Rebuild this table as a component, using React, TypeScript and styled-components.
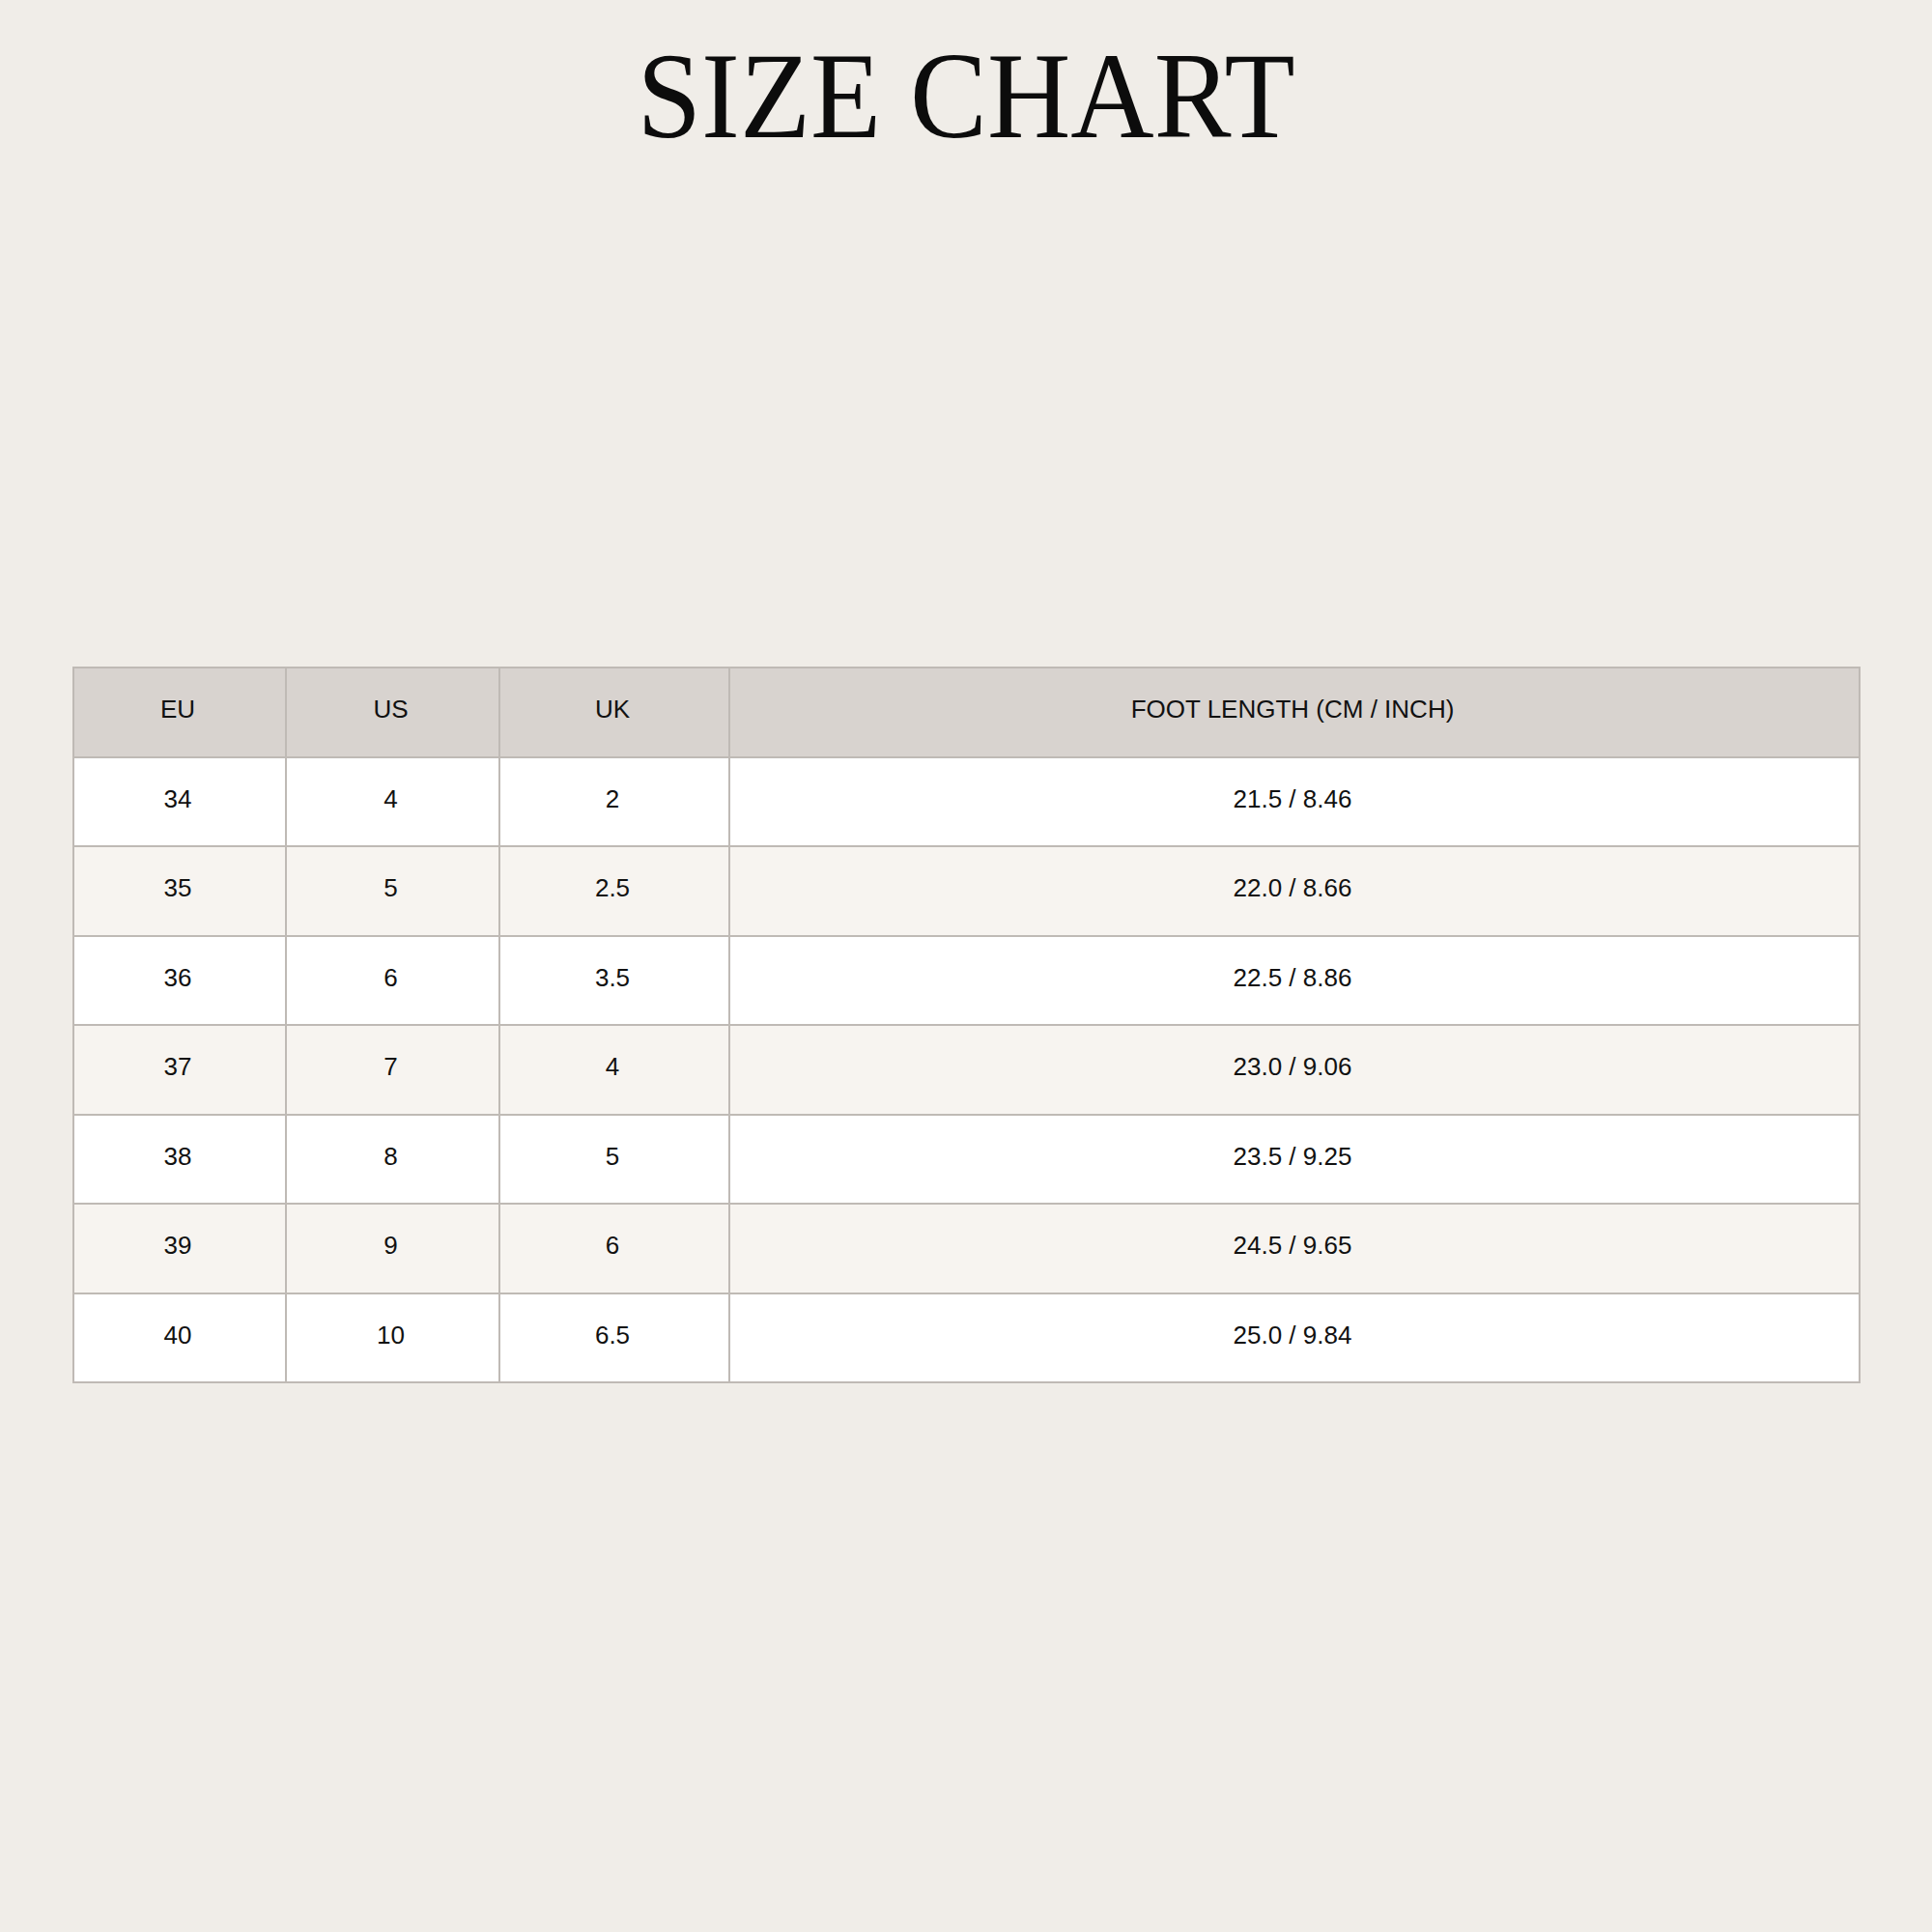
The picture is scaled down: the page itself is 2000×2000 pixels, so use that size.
import React from "react";
import styled, { createGlobalStyle } from "styled-components";

const GlobalStyle = createGlobalStyle`
  html, body {
    margin: 0;
    padding: 0;
    background: #f0ede8;
  }
`;

const sizes = [
  { eu: "34", us: "4", uk: "2", foot: "21.5 / 8.46" },
  { eu: "35", us: "5", uk: "2.5", foot: "22.0 / 8.66" },
  { eu: "36", us: "6", uk: "3.5", foot: "22.5 / 8.86" },
  { eu: "37", us: "7", uk: "4", foot: "23.0 / 9.06" },
  { eu: "38", us: "8", uk: "5", foot: "23.5 / 9.25" },
  { eu: "39", us: "9", uk: "6", foot: "24.5 / 9.65" },
  { eu: "40", us: "10", uk: "6.5", foot: "25.0 / 9.84" },
];

const Page = styled.div`
  width: 2000px;
  height: 2000px;
  background: #f0ede8;
  padding-top: 35px;
  box-sizing: border-box;
`;

const Title = styled.h1`
  margin: 0;
  font-family: "Liberation Serif", "Times New Roman", serif;
  font-weight: 400;
  font-size: 128px;
  line-height: 1;
  color: #0c0c0c;
  text-align: center;
  transform: scaleX(0.935);
`;

const TableWrap = styled.div`
  margin-top: 527px;
  padding: 0 74px 0 75px;
`;

const Table = styled.table`
  width: 100%;
  border-collapse: collapse;
  table-layout: fixed;
  font-family: "Liberation Sans", Arial, sans-serif;
  font-size: 26px;
  color: #111;
  border: 2px solid #bfbab5;
`;

const HeadCell = styled.th`
  height: 85.5px;
  padding: 0 4px 5px 0;
  background: #d8d3cf;
  font-weight: 400;
  text-align: center;
  vertical-align: middle;
  border: 2px solid #bfbab5;
`;

const Row = styled.tr<{ $striped: boolean }>`
  background: ${(p) => (p.$striped ? "#f7f4f0" : "#ffffff")};
`;

const Cell = styled.td`
  height: 85.5px;
  padding: 0 4px 5px 0;
  text-align: center;
  vertical-align: middle;
  border: 2px solid #bfbab5;
`;

const App = () => (
  <>
    <GlobalStyle />
    <Page>
      <Title>SIZE CHART</Title>
      <TableWrap>
        <Table>
          <colgroup>
            <col style={{ width: 220 }} />
            <col style={{ width: 221 }} />
            <col style={{ width: 238 }} />
            <col />
          </colgroup>
          <thead>
            <tr>
              <HeadCell>EU</HeadCell>
              <HeadCell>US</HeadCell>
              <HeadCell>UK</HeadCell>
              <HeadCell>FOOT LENGTH (CM / INCH)</HeadCell>
            </tr>
          </thead>
          <tbody>
            {sizes.map((s, i) => (
              <Row key={s.eu} $striped={i % 2 === 1}>
                <Cell>{s.eu}</Cell>
                <Cell>{s.us}</Cell>
                <Cell>{s.uk}</Cell>
                <Cell>{s.foot}</Cell>
              </Row>
            ))}
          </tbody>
        </Table>
      </TableWrap>
    </Page>
  </>
);

export default App;
